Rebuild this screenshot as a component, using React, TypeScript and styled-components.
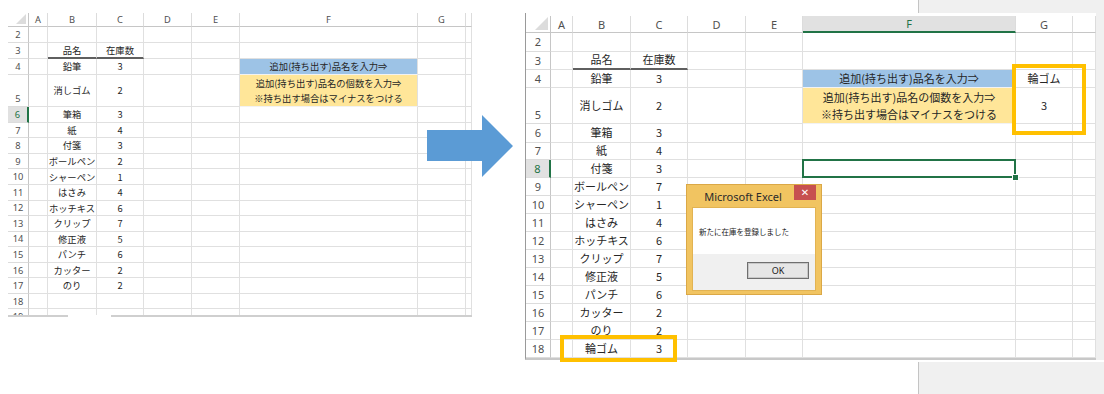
import React from 'react';
import styled, { createGlobalStyle, css } from 'styled-components';

const Global = createGlobalStyle`
  html, body { margin: 0; padding: 0; background: #ffffff; }
  body {
    width: 1104px; height: 394px; overflow: hidden;
    font-family: "Noto Sans CJK JP", "Noto Sans", sans-serif;
  }
`;

type Fill = 'blue' | 'yellow';
type CellSpec = { lines?: string[]; fill?: Fill; underline?: boolean; selected?: boolean };

const fills: Record<Fill, string> = { blue: '#9dc3e6', yellow: '#ffe699' };

const Page = styled.div`
  position: relative;
  width: 1104px;
  height: 394px;
  display: flex;
  align-items: stretch;
`;

const LeftPane = styled.div`
  flex: none;
  width: 464px;
  padding: 13px 0 0 8px;
  display: flex;
  flex-direction: column;
`;

const SheetClip = styled.div<{ $h: number }>`
  height: ${(p) => p.$h}px;
  overflow: hidden;
`;

const ScrollEdge = styled.div`
  display: flex;
  height: 2px;
`;

const EdgeSeg = styled.div<{ $w?: number }>`
  ${(p) => (p.$w ? css`width: ${p.$w}px;` : css`flex: 1;`)}
  background: #cfcfcf;
`;

const EdgeGap = styled.div<{ $w: number }>`
  width: ${(p) => p.$w}px;
`;

const RightPane = styled.div`
  flex: none;
  width: 579px;
  margin-left: 53px;
  display: flex;
  flex-direction: column;
`;

const Strip = styled.div<{ $h?: number }>`
  display: flex;
  ${(p) => (p.$h ? css`height: ${p.$h}px;` : css`flex: 1;`)}
`;

const WhiteFill = styled.div<{ $w: number }>`
  width: ${(p) => p.$w}px;
  background: #ffffff;
`;

const GrayFill = styled.div`
  flex: 1;
  background: #f0f0f0;
  border-left: 1px solid #c4c4c4;
`;

const SheetRow = styled.div`
  display: flex;
  margin-bottom: 2px;
`;

const SheetFrame = styled.div`
  position: relative;
  width: 570px;
  padding-top: 3px;
  border-left: 1px solid #9a9a9a;
  border-bottom: 2px solid #c8c8c8;
`;

const SideFill = styled.div`
  flex: 1;
  background: #f0f0f0;
`;

const Grid = styled.div<{ $cols: string; $rows: string; $fs: number }>`
  display: grid;
  grid-template-columns: ${(p) => p.$cols};
  grid-template-rows: ${(p) => p.$rows};
  font-size: ${(p) => p.$fs}px;
  color: #262626;
`;

const Corner = styled.div`
  box-sizing: border-box;
  border-right: 1px solid #c6c6c6;
  border-bottom: 1px solid #c6c6c6;
  display: flex;
  align-items: flex-end;
  justify-content: flex-end;
  padding: 0 2px 2px 0;
`;

const CornerTri = styled.div<{ $s: number }>`
  width: 0;
  height: 0;
  border-left: ${(p) => p.$s}px solid transparent;
  border-bottom: ${(p) => p.$s}px solid #dcdcdc;
`;

const ColHead = styled.div<{ $active?: boolean }>`
  box-sizing: border-box;
  display: flex;
  align-items: center;
  justify-content: center;
  border-right: 1px solid #dcdcdc;
  border-bottom: 1px solid #c6c6c6;
  font-family: "Noto Sans", sans-serif;
  color: #505050;
  overflow: hidden;
  ${(p) =>
    p.$active &&
    css`
      background: #e1e1e1;
      color: #217346;
      border-bottom: 2px solid #217346;
    `}
`;

const RowHead = styled.div<{ $active?: boolean; $bottom?: boolean }>`
  box-sizing: border-box;
  display: flex;
  justify-content: center;
  align-items: ${(p) => (p.$bottom ? 'flex-end' : 'center')};
  padding-bottom: ${(p) => (p.$bottom ? '1px' : '0')};
  border-bottom: 1px solid #dcdcdc;
  border-right: 1px solid #c6c6c6;
  font-family: "Noto Sans", sans-serif;
  color: #505050;
  ${(p) =>
    p.$active &&
    css`
      background: #e1e1e1;
      color: #217346;
      border-right: 2px solid #217346;
    `}
`;

const Cell = styled.div<{ $fill?: Fill; $underline?: boolean; $selected?: boolean }>`
  box-sizing: border-box;
  position: relative;
  display: flex;
  flex-direction: column;
  align-items: center;
  justify-content: center;
  border-right: 1px solid #e0e0e0;
  border-bottom: 1px solid #e0e0e0;
  white-space: nowrap;
  line-height: 1.55;
  background: ${(p) => (p.$fill ? fills[p.$fill] : 'transparent')};
  ${(p) => p.$fill && css`border-bottom-color: #f2f2f2;`}
  ${(p) => p.$underline && css`border-bottom: 2px solid #5f5f5f;`}
  ${(p) =>
    p.$selected &&
    css`
      &::after {
        content: '';
        position: absolute;
        left: -1px;
        top: -1px;
        right: -1px;
        bottom: -1px;
        border: 2px solid #217346;
      }
      &::before {
        content: '';
        position: absolute;
        right: -4px;
        bottom: -4px;
        width: 5px;
        height: 5px;
        background: #217346;
        border: 1px solid #ffffff;
        z-index: 1;
      }
    `}
`;

const Highlight = styled.div<{ $x: number; $y: number; $w: number; $h: number }>`
  position: absolute;
  left: ${(p) => p.$x}px;
  top: ${(p) => p.$y}px;
  width: ${(p) => p.$w}px;
  height: ${(p) => p.$h}px;
  box-sizing: border-box;
  border: 4px solid #ffc000;
  pointer-events: none;
`;

const Arrow = styled.svg`
  position: absolute;
  left: 427px;
  top: 115px;
`;

/* Dialog */
const DialogFrame = styled.div`
  position: absolute;
  left: 160px;
  top: 171px;
  width: 136px;
  height: 111px;
  box-sizing: border-box;
  background: #f1c461;
  border: 1px solid #dba846;
  display: flex;
  flex-direction: column;
  padding: 0 5px 3px;
  z-index: 2;
`;

const TitleBar = styled.div`
  height: 22px;
  display: flex;
  align-items: flex-start;
`;

const TitleText = styled.div`
  flex: 1;
  text-align: center;
  font-family: "Noto Sans", sans-serif;
  font-size: 11px;
  line-height: 23px;
  color: #2b2b2b;
`;

const CloseBtn = styled.div`
  width: 22px;
  height: 15px;
  background: #c75050;
  color: #ffffff;
  display: flex;
  align-items: center;
  justify-content: center;
  font-family: "DejaVu Sans", sans-serif;
  font-size: 10px;
  font-weight: bold;
  line-height: 1;
`;

const DialogBody = styled.div`
  flex: 1;
  display: flex;
  flex-direction: column;
  background: #ffffff;
  border: 1px solid #e2b352;
`;

const Message = styled.div`
  height: 46px;
  display: flex;
  align-items: center;
  padding-left: 6px;
  font-size: 7.5px;
  color: #1a1a1a;
`;

const ButtonRow = styled.div`
  flex: 1;
  background: #f0f0f0;
  display: flex;
  justify-content: flex-end;
  align-items: flex-start;
  padding: 8px 6px 0 0;
`;

const OkButton = styled.div`
  width: 62px;
  height: 17px;
  box-sizing: border-box;
  border: 1px solid #6f6f6f;
  box-shadow: inset 0 0 0 1px #c8c8c8;
  background: #e6e6e6;
  font-family: "Noto Sans", sans-serif;
  font-size: 9px;
  display: flex;
  align-items: center;
  justify-content: center;
  color: #1a1a1a;
`;

const COLS = ['A', 'B', 'C', 'D', 'E', 'F', 'G', 'H'];

type SheetProps = {
  cols: number[];
  headerH: number;
  rowHeights: number[];
  fs: number;
  cornerSize: number;
  activeCol?: string;
  activeRow?: number;
  cells: Record<string, CellSpec>;
};

function Sheet({ cols, headerH, rowHeights, fs, cornerSize, activeCol, activeRow, cells }: SheetProps) {
  const rows = rowHeights.map((_, i) => i + 2);
  return (
    <Grid
      $cols={cols.map((c) => `${c}px`).join(' ')}
      $rows={[headerH, ...rowHeights].map((r) => `${r}px`).join(' ')}
      $fs={fs}
    >
      <Corner>
        <CornerTri $s={cornerSize} />
      </Corner>
      {COLS.slice(0, cols.length - 1).map((c) => (
        <ColHead key={c} $active={activeCol === c}>
          {c === 'H' ? '' : c}
        </ColHead>
      ))}
      {rows.map((r) => (
        <React.Fragment key={r}>
          <RowHead $active={activeRow === r} $bottom={r === 5}>
            {r}
          </RowHead>
          {COLS.slice(0, cols.length - 1).map((c) => {
            const spec = cells[`${c}${r}`];
            return (
              <Cell key={c} $fill={spec?.fill} $underline={spec?.underline} $selected={spec?.selected}>
                {spec?.lines?.map((l, i) => <span key={i}>{l}</span>)}
              </Cell>
            );
          })}
        </React.Fragment>
      ))}
    </Grid>
  );
}

const items: [string, string][] = [
  ['鉛筆', '3'],
  ['消しゴム', '2'],
  ['筆箱', '3'],
  ['紙', '4'],
  ['付箋', '3'],
  ['ボールペン', '7'],
  ['シャーペン', '1'],
  ['はさみ', '4'],
  ['ホッチキス', '6'],
  ['クリップ', '7'],
  ['修正液', '5'],
  ['パンチ', '6'],
  ['カッター', '2'],
  ['のり', '2'],
];

function baseCells(list: [string, string][]): Record<string, CellSpec> {
  const cells: Record<string, CellSpec> = {
    B3: { lines: ['品名'], underline: true },
    C3: { lines: ['在庫数'], underline: true },
    F4: { lines: ['追加(持ち出す)品名を入力⇒'], fill: 'blue' },
    F5: { lines: ['追加(持ち出す)品名の個数を入力⇒', '※持ち出す場合はマイナスをつける'], fill: 'yellow' },
  };
  list.forEach(([name, qty], i) => {
    cells[`B${i + 4}`] = { lines: [name] };
    cells[`C${i + 4}`] = { lines: [qty] };
  });
  return cells;
}

const beforeList = items.map(([n, q]) => [n, n === 'ボールペン' ? '2' : q] as [string, string]);
const afterList: [string, string][] = [...items, ['輪ゴム', '3']];

const leftCells = baseCells(beforeList);
const rightCells: Record<string, CellSpec> = {
  ...baseCells(afterList),
  G4: { lines: ['輪ゴム'] },
  G5: { lines: ['3'] },
  F8: { selected: true },
};

export default function App() {
  return (
    <>
      <Global />
      <Page>
        <LeftPane>
          <SheetClip $h={302}>
            <Sheet
              cols={[21, 19, 49, 47, 48, 48, 178, 48, 6]}
              headerH={14.3}
              rowHeights={[16, 16, 15.7, 32.3, ...Array(14).fill(15.55)]}
              fs={9.3}
              cornerSize={10}
              activeRow={6}
              cells={leftCells}
            />
          </SheetClip>
          <ScrollEdge>
            <EdgeSeg $w={60} />
            <EdgeGap $w={43} />
            <EdgeSeg />
          </ScrollEdge>
        </LeftPane>

        <RightPane>
          <Strip $h={13}>
            <WhiteFill $w={393} />
            <GrayFill />
          </Strip>
          <SheetRow>
            <SheetFrame>
              <Sheet
                cols={[25, 22, 58, 57, 58, 57, 213, 57, 23]}
                headerH={17.3}
                rowHeights={[18.4, 18.3, 18.3, 36, 18.4, 17.6, 18, 17.7, 18, 18, 18, 18, 18, 18, 18, 18, 18.3]}
                fs={11}
                cornerSize={13}
                activeCol="F"
                activeRow={8}
                cells={rightCells}
              />
              <Highlight $x={486} $y={51} $w={74} $h={71} />
              <Highlight $x={34} $y={322} $w={117} $h={27} />
              <DialogFrame>
                <TitleBar>
                  <TitleText>Microsoft Excel</TitleText>
                  <CloseBtn>✕</CloseBtn>
                </TitleBar>
                <DialogBody>
                  <Message>新たに在庫を登録しました</Message>
                  <ButtonRow>
                    <OkButton>OK</OkButton>
                  </ButtonRow>
                </DialogBody>
              </DialogFrame>
            </SheetFrame>
            <SideFill />
          </SheetRow>
          <Strip>
            <WhiteFill $w={393} />
            <GrayFill />
          </Strip>
        </RightPane>

        <Arrow width="86" height="62" viewBox="0 0 86 62">
          <polygon points="0,15 55,15 55,0 86,31 55,62 55,46 0,46" fill="#5b9bd5" />
        </Arrow>
      </Page>
    </>
  );
}
